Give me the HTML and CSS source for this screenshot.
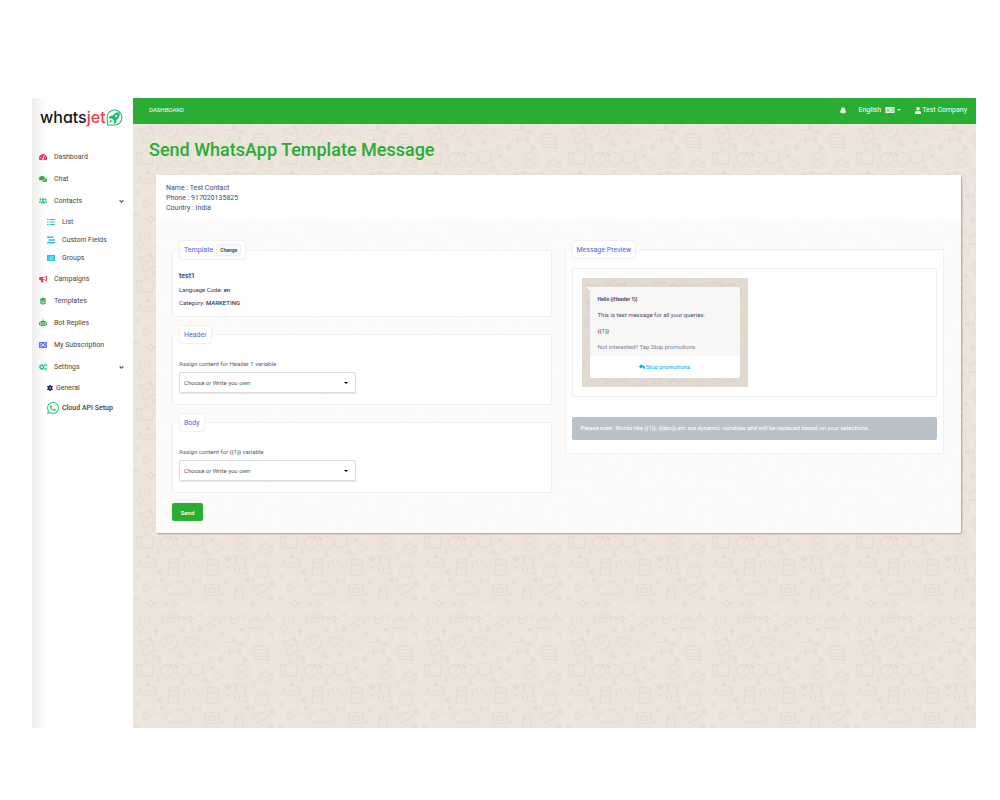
FILE: index.html
```html
<!DOCTYPE html>
<html lang="en">
<head>
    <meta charset="UTF-8">
    <meta name="viewport" content="width=device-width, initial-scale=1.0">
    <link rel="stylesheet" href="styles.css">
    <title>Send WhatsApp Template Message</title>
</head>
<body>
    <div class="app">
        <aside class="sidebar">
            <a class="logo" href="#">
                <span>whats<span class="logo-red">jet</span></span>
                <svg viewBox="0 0 32 32"><path d="M3 30 2 16A14 14 0 1 1 16 30Z" fill="none" stroke="#16c06a" stroke-width="2"/><path d="M26 6c-8 0-11 3-13 6l-6 1-2 5 6 0 4 4 0 6 4-2 1-6c4-2 6-6 6-14zM9 20l-4 7 7-4z" fill="#16c06a"/><circle cx="19" cy="13" r="2" fill="#fff"/></svg>
            </a>
            <ul class="menu">
                <li><a href="#"><svg class="red" viewBox="0 0 16 16"><path d="M8 2a8 8 0 0 0-7 12h14A8 8 0 0 0 8 2z"/><path d="M8 11l3-6M3 9h1M5 5l1 1M12 9h1" stroke="#fff" stroke-width="1.5"/><circle cx="8" cy="11.500" r="2" fill="#fff"/></svg>Dashboard</a></li>
                <li><a href="#"><svg class="green" viewBox="0 0 16 16"><path d="M6 2C2 2 0 4 0 6.500c0 1 .5 2 1 2.500l-1 2.500 3-1c5 1 9-1 9-4S9 2 6 2z"/><path d="M13 6c0 4-3 6-7 6 2 2 5 2 7 1.500l3 1-1-2.500c2-2 1-5-2-6z"/></svg>Chat</a></li>
                <li>
                    <a href="#"><svg class="mint" viewBox="0 0 16 16"><circle cx="8" cy="5" r="2.500"/><circle cx="3" cy="5" r="2"/><circle cx="13" cy="5" r="2"/><path d="M4 13c0-3 1-5 4-5s4 2 4 5zM0 12c0-3 1-4.500 4-4.500C3 9 3 10 3 12zM16 12c0-3-1-4.500-4-4.500 1 1.500 1 2.500 1 4.500z"/></svg>Contacts<svg class="arrow" viewBox="0 0 8 8"><path d="M1 2l3 3 3-3"/></svg></a>
                    <ul class="submenu">
                        <li><a href="#"><svg class="cyan" viewBox="0 0 16 16"><path d="M0 2h3v2H0zM0 7h3v2H0zM0 12h3v2H0zM5 2h11v2H5zM5 7h11v2H5zM5 12h11v2H5z"/></svg>List</a></li>
                        <li><a href="#"><svg class="cyan" viewBox="0 0 16 16"><path d="M0 1h13v3H0zM3 6.500h13v3H3zM0 12h16v3H0z"/></svg>Custom Fields</a></li>
                        <li><a href="#"><svg class="cyan" viewBox="0 0 16 16"><path d="M0 2h16v12H0z"/><path d="M3 6h2M3 8h2M3 11h2M6 6h7M6 8h7M6 11h7" stroke="#fff"/></svg>Groups</a></li>
                    </ul>
                </li>
                <li><a href="#"><svg class="red" viewBox="0 0 16 16"><path d="M16 1v12c-3-2-5-3-8-3l1 5H5l-2-5C1 10 0 9 0 7s1-3 3-3h4c4 0 6-1 9-3zM14 4c-2 1-4 1.500-6 2v2c2 .5 4 1 6 2z"/></svg>Campaigns</a></li>
                <li><a href="#"><svg class="green" viewBox="0 0 16 16"><path d="M8 1l7 3.500L8 8 1 4.500zM2 6l6 3 6-3v2.500l-6 3-6-3zM2 10l6 3 6-3v2.500l-6 3-6-3z"/></svg>Templates</a></li>
                <li><a href="#"><svg class="green" viewBox="0 0 16 16"><path d="M7 1h2v3h4v10H3V4h4zM0 7h2v5H0zM14 7h2v5h-2z"/><path d="M5 7h2v2H5zM9 7h2v2H9zM5 11h6v1H5z" fill="#fff"/></svg>Bot Replies</a></li>
                <li><a href="#"><svg class="indigo" viewBox="0 0 16 16"><path d="M0 2h16v12H0z"/><path d="M2 5h4M2 8h3M2 11h4M10 5h4M11 8h3M10 11h4" stroke="#fff"/><circle cx="8" cy="8" r="2" fill="#fff"/></svg>My Subscription</a></li>
                <li>
                    <a href="#"><svg class="mint" viewBox="0 0 16 16"><circle cx="5.500" cy="8" r="3.500" fill="none" stroke="currentColor" stroke-width="3"/><path d="M4.500 2h2v2h-2zM4.500 12h2v2h-2zM0 7h2v2H0z"/><circle cx="13" cy="4" r="2" fill="none" stroke="currentColor" stroke-width="2"/><circle cx="13" cy="12" r="2" fill="none" stroke="currentColor" stroke-width="2"/></svg>Settings<svg class="arrow" viewBox="0 0 8 8"><path d="M1 2l3 3 3-3"/></svg></a>
                    <ul class="submenu">
                        <li class="general"><a href="#"><svg class="navy" viewBox="0 0 16 16"><circle cx="8" cy="8" r="4" fill="none" stroke="currentColor" stroke-width="4"/><path d="M6 0h4v4H6zM6 12h4v4H6zM0 5l2-3 4 2-2 4zM16 5l-2-3-4 2 2 4zM0 11l2 3 4-2-2-4zM16 11l-2 3-4-2 2-4z"/></svg>General</a></li>
                        <li class="cloud"><a href="#"><svg class="mint" viewBox="0 32 448 448"><path d="M380.900 97.100C339 55.100 283.200 32 223.900 32c-122.400 0-222 99.600-222 222 0 39.100 10.200 77.300 29.600 111L0 480l117.700-30.900c32.400 17.700 68.900 27 106.100 27h.1c122.300 0 224.100-99.600 224.100-222 0-59.300-25.200-115-67.100-157zm-157 341.600c-33.200 0-65.700-8.900-94-25.700l-6.700-4-69.800 18.300L72 359.200l-4.400-7c-18.500-29.400-28.200-63.300-28.200-98.200 0-101.700 82.800-184.500 184.600-184.500 49.300 0 95.600 19.200 130.400 54.100 34.800 34.900 56.200 81.200 56.100 130.500 0 101.800-84.900 184.600-186.600 184.600zm101.200-138.200c-5.500-2.800-32.800-16.200-37.900-18-5.100-1.900-8.800-2.800-12.500 2.800-3.700 5.600-14.300 18-17.600 21.800-3.200 3.700-6.500 4.200-12 1.400-32.600-16.300-54-29.100-75.500-66-5.700-9.800 5.700-9.100 16.300-30.300 1.800-3.700.9-6.900-.5-9.700-1.400-2.800-12.500-30.100-17.100-41.200-4.500-10.800-9.100-9.300-12.500-9.500-3.200-.2-6.900-.2-10.600-.2-3.700 0-9.700 1.400-14.800 6.900-5.100 5.600-19.400 19-19.400 46.300 0 27.300 19.900 53.700 22.600 57.400 2.800 3.700 39.100 59.700 94.800 83.800 35.200 15.200 49 16.500 66.600 13.900 10.700-1.600 32.800-13.400 37.400-26.400 4.600-13 4.600-24.100 3.200-26.400-1.300-2.500-5-3.900-10.500-6.600z"/></svg>Cloud API Setup</a></li>
                    </ul>
                </li>
            </ul>
        </aside>
        <main class="content">
            <nav class="topbar">
                <a class="crumb" href="#">DASHBOARD</a>
                <a class="bell" href="#" aria-label="Notifications"><svg viewBox="0 0 448 512"><path d="M224 512c35.320 0 63.970-28.650 63.970-64H160.030c0 35.350 28.650 64 63.970 64zm215.390-149.710c-19.320-20.760-55.470-51.990-55.470-154.290 0-77.700-54.480-139.900-127.940-155.160V32c0-17.670-14.320-32-31.980-32s-31.980 14.330-31.980 32v20.840C118.560 68.100 64.080 130.300 64.080 208c0 102.300-36.150 133.530-55.470 154.290-6 6.450-8.660 14.160-8.610 21.710.11 16.400 12.980 32 32.100 32h383.800c19.120 0 32-15.600 32.100-32 .05-7.550-2.610-15.270-8.610-21.710z"/></svg></a>
                <a class="language" href="#">English <svg viewBox="0 0 20 16"><path d="M1 2h18v12H1z"/><path d="M3 12l2.500-7L8 12M4 10h3M12 6h6M15 4v2M17 6c-1 3-2 5-5 6M13 8c1 2 3 3 5 4M10 2v12" fill="none" stroke="#2aad33"/></svg><span class="caret"></span></a>
                <a class="account" href="#"><svg viewBox="0 0 448 512"><path d="M224 256c70.700 0 128-57.300 128-128S294.700 0 224 0 96 57.300 96 128s57.300 128 128 128zm89.600 32h-16.700c-22.200 10.200-46.900 16-72.900 16s-50.600-5.800-72.900-16h-16.700C60.200 288 0 348.200 0 422.400V464c0 26.500 21.500 48 48 48h352c26.500 0 48-21.500 48-48v-41.600c0-74.200-60.200-134.400-134.400-134.400z"/></svg>Test Company</a>
            </nav>
            <h1>Send WhatsApp Template Message</h1>
            <section class="card">
                <div class="card-header">
                    <p>Name : Test Contact</p>
                    <p>Phone : 917020135825</p>
                    <p>Country : India</p>
                </div>
                <form class="card-body">
                    <div class="column">
                        <fieldset class="template">
                            <legend>Template <button class="change" type="button">Change</button></legend>
                            <h2>test1</h2>
                            <p>Language Code: <b>en</b></p>
                            <p>Category: <b>MARKETING</b></p>
                        </fieldset>
                        <fieldset class="variable">
                            <legend>Header</legend>
                            <label for="header-field">Assign content for Header 1 variable</label>
                            <select id="header-field">
                                <option>Choose or Write you own</option>
                            </select>
                        </fieldset>
                        <fieldset class="variable">
                            <legend>Body</legend>
                            <label for="body-field">Assign content for {{1}} variable</label>
                            <select id="body-field">
                                <option>Choose or Write you own</option>
                            </select>
                        </fieldset>
                        <button class="send" type="submit">Send</button>
                    </div>
                    <div class="column">
                        <fieldset class="preview">
                            <legend>Message Preview</legend>
                            <div class="preview-box">
                                <div class="chat">
                                    <div class="bubble">
                                        <div class="message">
                                            <p class="title">Hello {{Header 1}}</p>
                                            <p>This is test message for all your queries.</p>
                                            <p>{{1}}</p>
                                            <p class="footer">Not interested? Tap Stop promotions</p>
                                        </div>
                                        <a class="reply" href="#"><svg viewBox="0 0 512 512"><path d="M8.309 189.836L184.313 37.851C199.719 24.546 224 35.347 224 56.015v80.053c160.629 1.839 288 34.032 288 186.258 0 61.441-39.581 122.309-83.333 154.132-13.653 9.931-33.111-2.533-28.077-18.631 45.344-145.012-21.507-183.510-176.590-185.742V360c0 20.700-24.300 31.453-39.687 18.164l-176.004-152c-11.071-9.562-11.086-26.753 0-36.328z"/></svg>Stop promotions</a>
                                    </div>
                                </div>
                            </div>
                            <p class="note"><b>Please note:</b> Words like {{1}}, {{abc}} etc are dynamic variables and will be replaced based on your selections.</p>
                        </fieldset>
                    </div>
                </form>
            </section>
        </main>
    </div>
</body>
</html>
```
FILE: styles.css
```css
* {
    margin: 0;
    padding: 0;
    box-sizing: border-box;
}
:root {
    --doodle: url("data:image/svg+xml,%3Csvg xmlns='http://www.w3.org/2000/svg' width='180' height='160' viewBox='0 0 180 160' fill='none' stroke='%23908478' stroke-opacity='.17' stroke-width='.9'%3E%3Cpath d='M14 22c-9-6-7-12-3-12 2 0 3 2 3 3 0-1 2-3 4-3 4 0 5 6-4 12zM36 8l20-4 2 9-20 4zM40 10l12-2M41 13l13-3M72 6l1 4 4 1-4 1-1 4-1-4-4-1 4-1zM92 18l14-9 4 7-14 8zM96 18l8 1M125 5c-6 1-6 11 1 12 6 0 8-8 3-11 2 6-5 8-7 3M146 12h15v11h-15zM150 12v-3h6v3M168 4l8 9-11-2zM8 40l15-5 4 16-13 6zM8 40l11 6 4-11M66 34h9c8 0 8 7 2 8h-2c-2 5-9 4-9-8zM90 42l12 9 3-1-1-4-12-8zM126 34l4 8 9-2-7 7 3 8-8-5-8 4 3-8-7-6h9zM150 45h17l3 17h-17zM153 50h13M154 54h13M155 58h13M10 68v14h-5v-14zM10 70l7-7 2 7h7l-2 13H10M72 66h16v12l-8 5-8-5zM100 82l14-10 5 6-13 10zM8 100c4-8 18-9 20 0s-15 11-20 0zM14 101h8M44 96h13v20H44zM94 96l13 1-1 20-15-1zM95 103l10 1M128 92l12 4 2 20-15-4zM128 92l6 20M12 130l14-8 3 6-14 9zM48 128c-10 0-10 14 1 13h17c8 0 6-9 0-9-1-10-15-10-18-4zM90 128h18v14H90zM126 150l4-19 6-2 2 18M127 136h10M150 132l15-5 4 8-15 6zM22 146l2 4 5 1-5 2-2 4-2-4-4-2 4-1zM76 152c4-6 10-6 14 0M164 78c-6-2-7 4-2 5-8 1-4 9 2 6 2 6 8 4 7-2 6-1 4-8-2-7 0-5-4-6-5-2z'/%3E%3Cg%3E%3Ccircle cx='46' cy='40' r='10'/%3E%3Ccircle cx='46' cy='37' r='4'/%3E%3Cpath d='M39 47c1-6 13-6 14 0M43 75l8-8 9 8M47 68l-3-4M52 74l4-10M132 73l9 8M141 73l-9 8'/%3E%3Ccircle cx='42' cy='76' r='8'/%3E%3Ccircle cx='62' cy='76' r='8'/%3E%3Ccircle cx='137' cy='77' r='9'/%3E%3Ccircle cx='73' cy='106' r='9'/%3E%3Cpath d='M68 108q5 5 10 0'/%3E%3Ccircle cx='70' cy='103' r='1'/%3E%3Ccircle cx='76' cy='103' r='1'/%3E%3Ccircle cx='50' cy='104' r='4'/%3E%3Ccircle cx='99' cy='135' r='4'/%3E%3Ccircle cx='162' cy='110' r='9'/%3E%3Ccircle cx='162' cy='110' r='5'/%3E%3C/g%3E%3Cpath d='M84 20l1 3 3 1-3 1-1 3-1-3-3-1 3-1zM24 56l5 2-4 4zM110 58l1 2 3 1-3 1-1 3-1-3-3-1 3-1zM30 84l4 3-5 3zM86 88l4-3 2 4zM118 92l1 3 3 1-3 1-1 3-1-3-3-1 3-1zM34 108l1 3 3 1-3 1-1 3-1-3-3-1 3-1zM74 120l5 3-4 3zM144 118l1 3 3 1-3 1-1 3-1-3-3-1 3-1zM52 150l5 4-7 2zM106 148l6 2-4 5zM174 124l1 3 3 1-3 1-1 3-1-3-3-1 3-1zM58 54l6 4-7 2zM140 60l3 4-5 1zM24 26c4-3 8 1 4 3M130 22l10 4M134 26l6-4M94 60c4-3 6 3 2 4'/%3E%3Cg%3E%3Ccircle cx='29' cy='28' r='1.500'/%3E%3Ccircle cx='62' cy='25' r='2'/%3E%3Ccircle cx='74' cy='25' r='1'/%3E%3Ccircle cx='112' cy='30' r='2'/%3E%3Ccircle cx='144' cy='34' r='1.500'/%3E%3Ccircle cx='173' cy='30' r='2'/%3E%3Ccircle cx='32' cy='60' r='1.500'/%3E%3Ccircle cx='78' cy='56' r='2'/%3E%3Ccircle cx='98' cy='72' r='1.500'/%3E%3Ccircle cx='124' cy='64' r='1'/%3E%3Ccircle cx='34' cy='64' r='2'/%3E%3Ccircle cx='94' cy='91' r='1'/%3E%3Ccircle cx='120' cy='108' r='2'/%3E%3Ccircle cx='151' cy='94' r='1.500'/%3E%3Ccircle cx='36' cy='122' r='1.500'/%3E%3Ccircle cx='84' cy='124' r='2'/%3E%3Ccircle cx='116' cy='126' r='1.500'/%3E%3Ccircle cx='150' cy='124' r='1'/%3E%3Ccircle cx='172' cy='146' r='2'/%3E%3Ccircle cx='42' cy='152' r='2'/%3E%3Ccircle cx='112' cy='140' r='1.500'/%3E%3Ccircle cx='150' cy='152' r='2'/%3E%3Ccircle cx='8' cy='28' r='1.500'/%3E%3Ccircle cx='64' cy='10' r='1.500'/%3E%3Ccircle cx='84' cy='6' r='1.500'/%3E%3Ccircle cx='114' cy='8' r='1'/%3E%3Ccircle cx='138' cy='8' r='2'/%3E%3Ccircle cx='6' cy='118' r='2'/%3E%3Ccircle cx='20' cy='92' r='1.500'/%3E%3Ccircle cx='62' cy='92' r='2'/%3E%3Ccircle cx='4' cy='146' r='2'/%3E%3C/g%3E%3C/svg%3E");
}
body {
    padding: 98px 24px 72px 32px;
    background-color: #fff;
    font-family: Roboto, sans-serif;
    font-size: 6px;
    line-height: 10px;
    color: #32325d;
}
a {
    color: inherit;
    text-decoration: none;
}
ul {
    list-style: none;
}
svg {
    fill: currentColor;
    flex-shrink: 0;
}
.app {
    display: flex;
    min-height: calc(100vh - 170px);
}

/* sidebar */
.sidebar {
    width: 101px;
    flex-shrink: 0;
    padding: 7px 8px 0 7px;
    background: linear-gradient(to right, #ededed, #fff 14px);
}
.logo {
    display: flex;
    align-items: center;
    height: 24px;
    padding-left: 1px;
    font-family: Inter, sans-serif;
    font-feature-settings: "cv11";
    font-size: 16px;
    font-weight: 500;
    line-height: 24px;
    color: #151515;
}
.logo svg {
    width: 17px;
    height: 17px;
}
.logo-red {
    color: #f0404f;
}
.menu {
    padding-top: 17px;
    font-size: 7px;
    color: #454545;
}
.menu a {
    display: flex;
    align-items: center;
    height: 22px;
}
.menu svg {
    width: 8px;
    height: 8px;
    margin-right: 7px;
}
.menu .arrow {
    width: 5px;
    height: 5px;
    margin-left: auto;
    margin-right: 1px;
    fill: none;
    stroke: #525f7f;
    stroke-width: 2;
}
.submenu {
    padding: 1px 0 1px 8px;
}
.submenu a {
    height: 18px;
}
.submenu .general svg {
    width: 6px;
    height: 6px;
    margin-right: 3px;
}
.submenu .cloud a {
    height: 22px;
    font-weight: 500;
}
.submenu .cloud svg {
    width: 12px;
    height: 12px;
    margin-right: 3px;
}
.red {
    color: #f5365c;
}
.green {
    color: #3aa845;
}
.mint {
    color: #20ce77;
}
.cyan {
    color: #25bfe3;
}
.indigo {
    color: #6573ee;
}
.navy {
    color: #172b4d;
}

/* main area */
.content {
    flex: 1;
    min-width: 0;
    background: #ede5dc var(--doodle);
    background-size: 144px 128px;
}
.topbar {
    display: flex;
    align-items: center;
    height: 26px;
    padding: 0 9px 2px 16px;
    background-color: #2aad33;
    font-size: 7px;
    color: #fff;
}
.topbar a {
    display: flex;
    align-items: center;
}
.topbar .crumb {
    margin-right: auto;
    font-size: 6px;
}
.topbar svg {
    height: 7px;
}
.bell {
    margin-right: 12px;
}
.language {
    margin-right: 14px;
}
.language svg {
    width: 10px;
    height: 8px;
    margin-left: 4px;
}
.caret {
    margin-left: 2px;
    border: 2px solid transparent;
    border-top-color: #fff;
    border-bottom: 0;
}
.account svg {
    margin-right: 1px;
}
h1 {
    margin: 14px 16px 13px;
    font-size: 18px;
    line-height: 24px;
    font-weight: 500;
    color: #2aad33;
}
.card {
    margin: 0 15px 0 23px;
    background-color: rgba(255, 255, 255, 0.85);
    border-radius: 2px;
    box-shadow: 1px 1px 2px rgba(0, 0, 0, 0.3);
}
.card-header {
    padding: 8px 10px 7px;
    background-color: #fff;
    font-size: 7px;
    color: #3f4b70;
}
.card-body {
    display: grid;
    grid-template-columns: 1fr 1fr;
    gap: 13px;
    padding: 20px 17px 12px 16px;
}
fieldset {
    min-width: 0;
    padding: 0 6px;
    background-color: rgba(255, 255, 255, 0.7);
    border: 1px solid #f1f1f3;
}
legend {
    display: flex;
    align-items: center;
    gap: 3px;
    height: 19px;
    padding: 0 4px;
    background-color: #fff;
    border: 1px solid #f0f0f3;
    border-radius: 3px;
    font-size: 7px;
    color: #5460e6;
}
.template {
    height: 77px;
}
.template legend {
    height: 20px;
}
.change {
    height: 12px;
    padding: 0 3px;
    background-color: #f8f9fa;
    border: 1px solid #edeff2;
    border-radius: 2px;
    font: 500 5px/10px Roboto, sans-serif;
    color: #333;
}
.template h2 {
    margin: 11px 0 2px;
    font-size: 7px;
    line-height: 10px;
    font-weight: 500;
}
.template p {
    line-height: 13px;
}
b {
    font-weight: 500;
}
.variable {
    margin-top: 8px;
    padding-bottom: 11px;
}
label {
    display: block;
    margin: 15px 0 3px;
    color: #525f7f;
}
select {
    appearance: none;
    display: block;
    width: 177px;
    height: 21px;
    padding: 0 4px;
    background: #fff url("data:image/svg+xml,%3Csvg xmlns='http://www.w3.org/2000/svg' width='4' height='2'%3E%3Cpath d='M0 0h4L2 2z'/%3E%3C/svg%3E") no-repeat right 7px center;
    border: 1px solid #dcdcdc;
    border-radius: 2px;
    box-shadow: 0 1px 1px rgba(0, 0, 0, 0.1);
    font: 6px Roboto, sans-serif;
    color: #555;
}
.send {
    display: block;
    width: 31px;
    height: 18px;
    margin-top: 10px;
    background-color: #2aad33;
    border: 0;
    border-radius: 2px;
    font: 500 6px Roboto, sans-serif;
    color: #fff;
}

/* message preview */
.preview {
    padding-bottom: 13px;
}
.preview-box {
    margin-top: 9px;
    padding: 9px;
    background-color: #fff;
    border: 1px solid #f0f0f0;
    border-radius: 2px;
}
.chat {
    width: 166px;
    padding: 9px 8px;
    background: #e2d9d1 var(--doodle);
    background-size: 108px 96px;
}
.bubble {
    position: relative;
    background-color: #fff;
    border-radius: 2px;
    color: #3f4b70;
}
.bubble::before {
    content: "";
    position: absolute;
    top: 0;
    left: -4px;
    border-top: 4px solid #f8f8f8;
    border-left: 4px solid transparent;
}
.message {
    padding: 7px 8px 4px;
    background-color: #f8f7f6;
    border-radius: 2px 2px 0 0;
}
.message p {
    margin-bottom: 6px;
}
.message .title {
    font-size: 5px;
    font-weight: 700;
}
.message .footer {
    margin-bottom: 0;
    color: #77819a;
}
.reply {
    display: flex;
    justify-content: center;
    align-items: center;
    height: 22px;
    gap: 1px;
    color: #00a5f4;
}
.reply svg {
    width: 6px;
    height: 6px;
}
.note {
    margin-top: 20px;
    padding: 6px 9px 7px;
    background-color: #b9c1c9;
    border-radius: 2px;
    color: #fff;
}
```
